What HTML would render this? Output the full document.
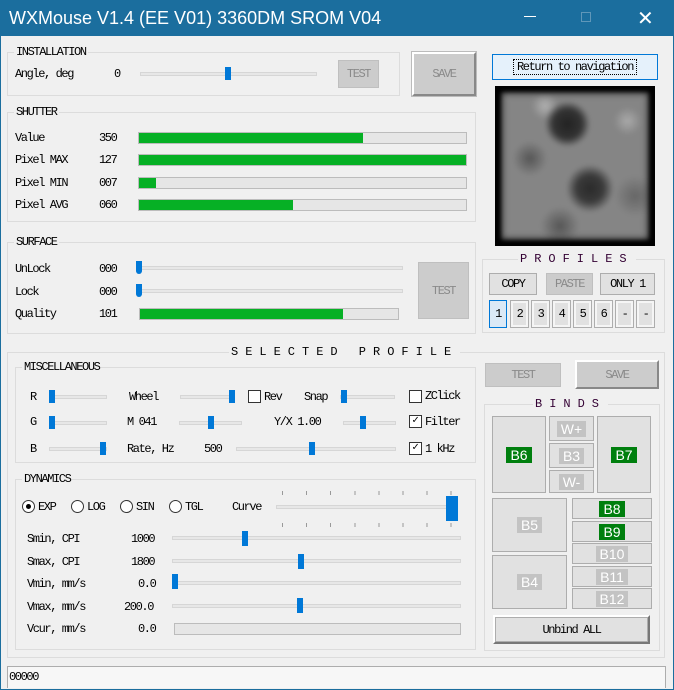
<!DOCTYPE html><html><head><style>
*{box-sizing:border-box;margin:0;padding:0}
body{width:674px;height:690px;background:#f0f0f0;position:relative;overflow:hidden;font-family:"Liberation Mono",monospace;font-size:12px;letter-spacing:-1.4px;color:#000}
.a{position:absolute}
.title{left:0;top:0;width:674px;height:36px;background:#1b6e9e;color:#fff;font-family:"Liberation Sans",sans-serif;font-size:18px;letter-spacing:0}
.g{position:absolute;border:1px solid #dcdcdc}
.gl{position:absolute;top:-8px;background:#f0f0f0;padding:0 2px;line-height:14px}
.t{position:absolute;line-height:13px;white-space:nowrap}
.tr{position:absolute;height:4px;background:#e7e7e7;border:1px solid #d6d6d6}
.th{position:absolute;width:6px;height:13px;background:#0078d7}
.bar{position:absolute;height:12px;background:#e6e6e6;border:1px solid #bcbcbc}
.bar i{position:absolute;left:0;top:0;bottom:0;background:#06b025}
.btn{position:absolute;background:#e1e1e1;border:1px solid #adadad;text-align:center;display:flex;align-items:center;justify-content:center}
.dis{background:#cccccc;border-color:#bfbfbf;color:#8a8a8a}
.bx{position:absolute;background:#e1e1e1;border:1px solid #adadad;display:flex;align-items:center;justify-content:center}
.lab{font-family:"Liberation Sans",sans-serif;font-size:14px;letter-spacing:0;color:#fff;padding:0 4px;line-height:16px}
.gn{background:#007f0e}.gy{background:#c3c3c3}
.cb{position:absolute;width:13px;height:13px;border:1px solid #333;background:#fff;font-size:11px;line-height:11px;text-align:center;letter-spacing:0}
.rd{position:absolute;width:13px;height:13px;border:1px solid #333;border-radius:50%;background:#fff}
.sp{letter-spacing:7px}
</style></head><body>
<div class="a title"><span class="a" style="left:9px;top:8px">WXMouse V1.4 (EE V01) 3360DM SROM V04</span>
<span class="a" style="left:524px;top:16px;width:12px;height:1px;background:#fff"></span>
<span class="a" style="left:581px;top:12px;width:10px;height:10px;border:1px solid #5f97b9"></span>
<span class="a" style="left:637px;top:6px;font-size:20px">✕</span></div>
<div class="a" style="left:0;top:36px;width:1px;height:654px;background:#1b6e9e"></div>
<div class="a" style="right:0;top:36px;width:1px;height:654px;background:#1b6e9e"></div>
<div class="a" style="left:0;bottom:0;width:674px;height:1px;background:#1b6e9e"></div>

<!-- INSTALLATION -->
<div class="g" style="left:7px;top:52px;width:393px;height:44px"><span class="gl" style="left:6px">INSTALLATION</span></div>
<span class="t" style="left:15px;top:68px">Angle, deg</span><span class="t" style="left:114px;top:68px">0</span>
<div class="tr" style="left:140px;top:72px;width:177px"></div>
<div class="th" style="left:225px;top:67px;width:6px"></div>
<div class="btn dis" style="left:338px;top:60px;width:41px;height:28px">TEST</div>
<div class="btn dis" style="left:412px;top:52px;width:64px;height:44px;border:2px solid #fff;border-right-color:#888;border-bottom-color:#888;outline:1px solid #bbb">SAVE</div>
<div class="btn" style="left:492px;top:54px;width:166px;height:26px;border:1px solid #0078d7;background:#e5f1fb"><span style="border:1px dotted #000;padding:0 3px">Return to navigation</span></div>
<div class="a" style="left:495px;top:86px;width:160px;height:160px;background:#000"><div class="a" style="left:5px;top:5px;width:150px;height:150px;background:radial-gradient(circle at 45% 22%,#222 0,#333 10%,transparent 16%),radial-gradient(circle at 60% 65%,#2a2a2a 0,#3a3a3a 10%,transparent 18%),radial-gradient(circle at 20% 45%,#555 0,transparent 12%),radial-gradient(circle at 40% 90%,#555 0,transparent 12%),radial-gradient(circle at 85% 20%,#aaa 0,transparent 8%),radial-gradient(circle at 30% 10%,#b0b0b0 0,transparent 8%),radial-gradient(circle at 90% 70%,#666 0,transparent 12%),#858585;filter:blur(2px)"></div><div class="a" style="left:0;top:0;width:160px;height:160px;box-shadow:inset 0 0 8px 6px #000"></div></div>

<!-- SHUTTER -->
<div class="g" style="left:7px;top:112px;width:469px;height:110px"><span class="gl" style="left:6px">SHUTTER</span></div>
<span class="t" style="left:15px;top:132px">Value</span><span class="t" style="left:99px;top:132px">350</span>
<div class="bar" style="left:138px;top:132px;width:329px"><i style="width:224px"></i></div>
<span class="t" style="left:15px;top:154px">Pixel MAX</span><span class="t" style="left:99px;top:154px">127</span>
<div class="bar" style="left:138px;top:154px;width:329px"><i style="width:327px"></i></div>
<span class="t" style="left:15px;top:177px">Pixel MIN</span><span class="t" style="left:99px;top:177px">007</span>
<div class="bar" style="left:138px;top:177px;width:329px"><i style="width:17px"></i></div>
<span class="t" style="left:15px;top:199px">Pixel AVG</span><span class="t" style="left:99px;top:199px">060</span>
<div class="bar" style="left:138px;top:199px;width:329px"><i style="width:154px"></i></div>

<!-- SURFACE -->
<div class="g" style="left:7px;top:242px;width:469px;height:92px"><span class="gl" style="left:6px">SURFACE</span></div>
<span class="t" style="left:15px;top:263px">UnLock</span><span class="t" style="left:99px;top:263px">000</span>
<div class="tr" style="left:140px;top:266px;width:263px"></div><div class="th" style="left:136px;top:261px;border-radius:0 0 3px 3px"></div>
<span class="t" style="left:15px;top:286px">Lock</span><span class="t" style="left:99px;top:286px">000</span>
<div class="tr" style="left:140px;top:289px;width:263px"></div><div class="th" style="left:136px;top:284px;border-radius:0 0 3px 3px"></div>
<span class="t" style="left:15px;top:308px">Quality</span><span class="t" style="left:99px;top:308px">101</span>
<div class="bar" style="left:139px;top:308px;width:260px"><i style="width:203px"></i></div>
<div class="btn dis" style="left:418px;top:262px;width:51px;height:57px">TEST</div>

<!-- PROFILES -->
<div class="g" style="left:482px;top:259px;width:183px;height:74px"><span class="gl sp" style="left:35px;color:#303">PROFILES</span></div>
<div class="btn" style="left:489px;top:273px;width:48px;height:22px">COPY</div>
<div class="btn dis" style="left:546px;top:273px;width:47px;height:22px">PASTE</div>
<div class="btn" style="left:600px;top:273px;width:55px;height:22px">ONLY 1</div>
<div class="btn" style="left:489px;top:300px;width:18px;height:28px;border-color:#0078d7;background:#dbe9f6">1</div>
<div class="btn" style="left:510px;top:300px;width:19px;height:28px;box-shadow:inset 0 0 0 2px #f5f5f5">2</div>
<div class="btn" style="left:531px;top:300px;width:19px;height:28px;box-shadow:inset 0 0 0 2px #f5f5f5">3</div>
<div class="btn" style="left:552px;top:300px;width:19px;height:28px;box-shadow:inset 0 0 0 2px #f5f5f5">4</div>
<div class="btn" style="left:573px;top:300px;width:19px;height:28px;box-shadow:inset 0 0 0 2px #f5f5f5">5</div>
<div class="btn" style="left:594px;top:300px;width:19px;height:28px;box-shadow:inset 0 0 0 2px #f5f5f5">6</div>
<div class="btn" style="left:615px;top:300px;width:19px;height:28px;box-shadow:inset 0 0 0 2px #f5f5f5">-</div>
<div class="btn" style="left:636px;top:300px;width:19px;height:28px;box-shadow:inset 0 0 0 2px #f5f5f5">-</div>

<!-- SELECTED PROFILE -->
<div class="g" style="left:7px;top:352px;width:658px;height:306px"><span class="gl sp" style="left:221px;top:-8px">SELECTED PROFILE</span></div>
<div class="g" style="left:15px;top:367px;width:461px;height:96px"><span class="gl" style="left:6px">MISCELLANEOUS</span></div>
<span class="t" style="left:30px;top:391px">R</span><div class="tr" style="left:49px;top:395px;width:58px"></div><div class="th" style="left:49px;top:390px"></div>
<span class="t" style="left:129px;top:391px">Wheel</span><div class="tr" style="left:180px;top:395px;width:55px"></div><div class="th" style="left:229px;top:390px"></div>
<div class="cb" style="left:248px;top:390px"></div><span class="t" style="left:264px;top:391px">Rev</span>
<span class="t" style="left:304px;top:391px">Snap</span><div class="tr" style="left:340px;top:395px;width:55px"></div><div class="th" style="left:341px;top:390px"></div>
<div class="cb" style="left:409px;top:390px"></div><span class="t" style="left:425px;top:390px">ZClick</span>
<span class="t" style="left:30px;top:416px">G</span><div class="tr" style="left:49px;top:421px;width:58px"></div><div class="th" style="left:49px;top:416px"></div>
<span class="t" style="left:127px;top:416px">M  041</span><div class="tr" style="left:179px;top:421px;width:63px"></div><div class="th" style="left:208px;top:416px"></div>
<span class="t" style="left:274px;top:416px">Y/X 1.00</span><div class="tr" style="left:343px;top:421px;width:53px"></div><div class="th" style="left:360px;top:416px"></div>
<div class="cb" style="left:409px;top:415px">✓</div><span class="t" style="left:425px;top:416px">Filter</span>
<span class="t" style="left:30px;top:443px">B</span><div class="tr" style="left:49px;top:447px;width:58px"></div><div class="th" style="left:100px;top:442px"></div>
<span class="t" style="left:127px;top:443px">Rate, Hz</span><span class="t" style="left:204px;top:443px">500</span><div class="tr" style="left:236px;top:447px;width:160px"></div><div class="th" style="left:309px;top:442px"></div>
<div class="cb" style="left:409px;top:442px">✓</div><span class="t" style="left:425px;top:443px">1 kHz</span>

<div class="g" style="left:15px;top:479px;width:461px;height:171px"><span class="gl" style="left:6px">DYNAMICS</span></div>
<div class="rd" style="left:22px;top:500px"><div class="a" style="left:3px;top:3px;width:5px;height:5px;border-radius:50%;background:#000"></div></div><span class="t" style="left:38px;top:501px">EXP</span>
<div class="rd" style="left:71px;top:500px"></div><span class="t" style="left:87px;top:501px">LOG</span>
<div class="rd" style="left:120px;top:500px"></div><span class="t" style="left:136px;top:501px">SIN</span>
<div class="rd" style="left:169px;top:500px"></div><span class="t" style="left:185px;top:501px">TGL</span>
<span class="t" style="left:232px;top:501px">Curve</span>
<div class="tr" style="left:276px;top:505px;width:180px"></div><div class="th" style="left:446px;top:496px;width:12px;height:25px"></div>
<div class="a" style="left:282px;top:491px;width:175px;height:4px;background:repeating-linear-gradient(90deg,#999 0 1px,transparent 1px 24.1px)"></div>
<div class="a" style="left:282px;top:523px;width:175px;height:4px;background:repeating-linear-gradient(90deg,#999 0 1px,transparent 1px 24.1px)"></div>
<span class="t" style="left:27px;top:533px">Smin, CPI</span><span class="t" style="left:131px;top:533px">1000</span><div class="tr" style="left:172px;top:536px;width:289px"></div><div class="th" style="left:242px;top:531px;height:15px"></div>
<span class="t" style="left:27px;top:556px">Smax, CPI</span><span class="t" style="left:131px;top:556px">1800</span><div class="tr" style="left:172px;top:559px;width:289px"></div><div class="th" style="left:298px;top:554px;height:15px"></div>
<span class="t" style="left:27px;top:578px">Vmin, mm/s</span><span class="t" style="left:138px;top:578px">0.0</span><div class="tr" style="left:172px;top:581px;width:289px"></div><div class="th" style="left:172px;top:574px;height:15px"></div>
<span class="t" style="left:27px;top:601px">Vmax, mm/s</span><span class="t" style="left:124px;top:601px">200.0</span><div class="tr" style="left:172px;top:604px;width:289px"></div><div class="th" style="left:297px;top:598px;height:15px"></div>
<span class="t" style="left:27px;top:623px">Vcur, mm/s</span><span class="t" style="left:138px;top:623px">0.0</span><div class="bar" style="left:174px;top:623px;width:287px"></div>

<div class="btn dis" style="left:485px;top:363px;width:76px;height:24px">TEST</div>
<div class="btn dis" style="left:575px;top:360px;width:84px;height:29px;border:2px solid #fff;border-right-color:#888;border-bottom-color:#888">SAVE</div>

<div class="g" style="left:484px;top:404px;width:176px;height:247px"><span class="gl sp" style="left:48px;color:#303">BINDS</span></div>
<div class="bx" style="left:492px;top:416px;width:54px;height:77px"><span class="lab gn">B6</span></div>
<div class="bx" style="left:549px;top:416px;width:45px;height:25px"><span class="lab gy">W+</span></div>
<div class="bx" style="left:549px;top:443px;width:45px;height:25px"><span class="lab gy">B3</span></div>
<div class="bx" style="left:549px;top:470px;width:45px;height:23px"><span class="lab gy">W-</span></div>
<div class="bx" style="left:597px;top:416px;width:54px;height:77px"><span class="lab gn">B7</span></div>
<div class="bx" style="left:492px;top:498px;width:75px;height:54px"><span class="lab gy">B5</span></div>
<div class="bx" style="left:492px;top:555px;width:75px;height:54px"><span class="lab gy">B4</span></div>
<div class="bx" style="left:572px;top:498px;width:80px;height:21px"><span class="lab gn">B8</span></div>
<div class="bx" style="left:572px;top:521px;width:80px;height:21px"><span class="lab gn">B9</span></div>
<div class="bx" style="left:572px;top:543px;width:80px;height:21px"><span class="lab gy">B10</span></div>
<div class="bx" style="left:572px;top:566px;width:80px;height:21px"><span class="lab gy">B11</span></div>
<div class="bx" style="left:572px;top:588px;width:80px;height:21px"><span class="lab gy">B12</span></div>
<div class="btn" style="left:493px;top:615px;width:157px;height:29px;border:2px solid #fff;border-right-color:#777;border-bottom-color:#777;box-shadow:inset 0 0 0 1px #adadad">Unbind ALL</div>

<div class="a" style="left:7px;top:666px;width:659px;height:22px;border:1px solid #adadad;border-bottom:none;background:#f7f7f7"><span class="t" style="left:1px;top:4px">00000</span></div>
</body></html>
